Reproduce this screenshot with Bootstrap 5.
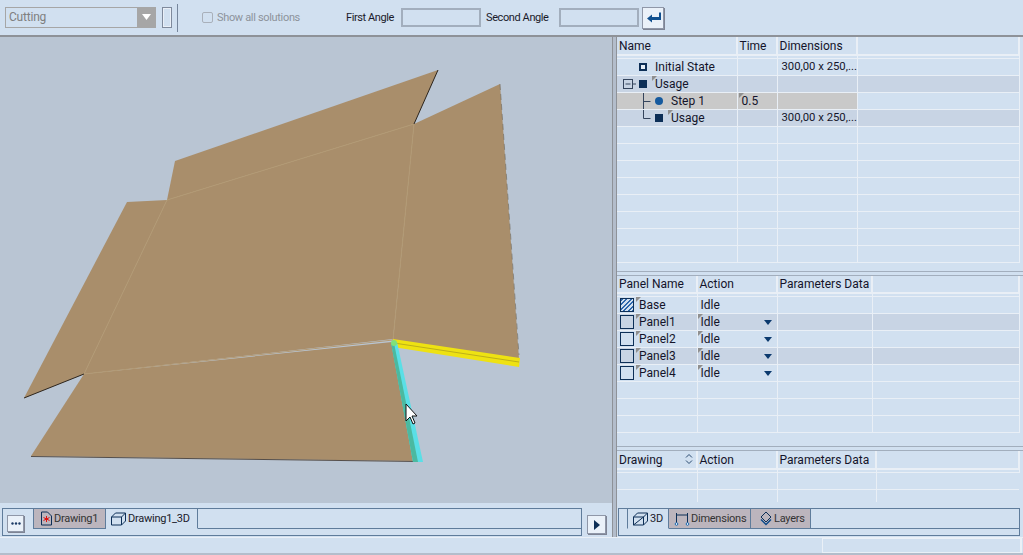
<!DOCTYPE html>
<html lang="en"><head><meta charset="utf-8"><title>Cutting</title>
<link href="https://cdn.jsdelivr.net/npm/bootstrap@5.3.0/dist/css/bootstrap.min.css" rel="stylesheet">
<style>
html,body{height:555px;overflow:hidden}
body{background:#d1e0f0;font:12px/16px Roboto,"Liberation Sans",sans-serif;color:#1a1a2a;width:1023px}
.tbar{height:37px;border-bottom:2px solid #8e9298;padding-left:5px;font-size:11px;white-space:nowrap}
.combo{width:151px;height:21px;border:1px solid #a6a6a6;margin-top:-1px;color:#7f7f7f;padding-left:3px;line-height:19px;font-size:12px;letter-spacing:-.2px}
.comboarr{width:19px;height:21px;background:#a6a6a6;margin-left:auto;margin-right:-1px;margin-top:-1px}
.mini{width:10px;height:21px;border:1px solid #7f8a9c;box-shadow:inset 0 0 0 1px #e9eff7;margin-left:6px}
.vsep{width:1px;height:28px;background:#76869c;margin-left:5px}
.chk{width:11px;height:11px;border:1px solid #a9b0ba;border-radius:2px;margin-left:24px;margin-right:4px}
.dimtxt{color:#8d939b;width:84px;letter-spacing:-.33px}
.lbl1{margin-left:45px;width:55px;letter-spacing:-.4px}
.lbl2{margin-left:5px;width:73px;letter-spacing:-.4px}
.angle{width:80px;height:19px;border:2px solid #a2aebd;background:#d1e0f0}
.okbtn{width:22px;height:22px;background:#eaf1f9;border:1px solid #8f97a8;box-shadow:1px 1px 0 #7e8494;margin-left:3px}
.mainrow{height:500px}
.leftpane{width:612px;height:500px}
.canvasbox{height:466px;background:#b9c5d3}
.canvasbox svg{display:block}
.bottomtabs{height:34px;padding:5px 0 0 2px}
.tabframe{border:1px solid #5f7c9b;height:28px;font-size:11px;letter-spacing:-.25px}
.tabframe svg{flex:none}
.lefttabs{width:580px}
.dots{width:17px;height:17px;background:#eaf1f9;border:1px solid #8f97a8;box-shadow:1px 1px 0 #7e8494;margin:6px 9px 0 4px;flex:none}
.tabitem{height:20px;border-right:1px solid #5f7c9b;border-bottom:1px solid #5f7c9b;line-height:20px;gap:1px;flex:none}
.tabon{background:#bcb5bd;color:#333}
.taboff{border-bottom-color:transparent;background:#d1e0f0}
.tabfill{height:20px;border-bottom:1px solid #5f7c9b}
.tabfirst{padding-left:6px;border-left:1px solid #5f7c9b}
.playbtn{width:19px;height:19px;background:#eaf1f9;border:1px solid #8f97a8;box-shadow:1px 1px 0 #7e8494;margin:7px 0 0 5px;flex:none}
.splitbar{width:5px;height:500px;background:#b3bdcb;border-left:1px solid #8e9298;border-right:1px solid #8e9298}
.rightpane{width:406px}
.grid1{height:235px;border-bottom:1px solid #a2aebd}
.grid2{height:172px;margin-top:3px;border-top:1px solid #a2aebd;border-bottom:1px solid #a2aebd}
.grid3{height:87px;margin-top:3px;border-top:1px solid #a2aebd}
.gridtbl{table-layout:fixed;border-collapse:collapse;width:403px}
.gridtbl td,.gridtbl th{font-weight:400;height:17px;padding:0;border:solid #e9eff6;border-width:0 1px 1px 0;line-height:16px;white-space:nowrap;overflow:hidden;color:#14142a}
.gridtbl .headrow th{height:17px;border-width:0 2px 0 0;padding-left:1.500px;vertical-align:top;padding-top:1px;position:relative}
.gridtbl .headrow th:first-child{padding-left:2px}
.gridtbl .spacerow td{height:3px;border-width:2px 1px 1px 0;font-size:0;line-height:0;background:#d1e0f0}
.grid2 .gridtbl .headrow th{height:16px;padding-top:0}
.gridtbl .oddrow td{background:#c8d4e4}
.gridtbl .selrow td.seltd{background:#c9c9c9}
.flagtxt{position:relative}
.flagtxt::before{content:"";position:absolute;left:-3px;top:-1px;border-top:5px solid #8f8f8f;border-right:5px solid transparent}
.cellicon{display:inline-block;vertical-align:-2px}
.gridtbl .dimcell{padding-left:4px;font-size:11.300px}
.gridtbl .idlecell{position:relative;padding-left:3px}
.tri{position:absolute;right:5px;top:6px;border-top:5px solid #0c3a6e;border-left:4px solid transparent;border-right:4px solid transparent}
.boxi{display:inline-block;width:14px;height:14px;border:1px solid #0d2f57;vertical-align:-3px;margin:0 5px 0 3px}
.hatched{background:repeating-linear-gradient(135deg,#2d67ad 0 1.5px,#d1e0f0 1.5px 3.2px)}
.rtabs{margin:6px 3px 0 1px;width:402px;padding-left:8px}
.statusbar{height:18px;border-top:1px solid #eaf0f7;border-bottom:2px solid #b3bdcb}
.statbox{width:200px;height:15px;margin-left:auto;margin-right:1px;border:1px solid #eaf0f7;border-right-width:2px;background:#d1e0f0}
</style></head><body>

<div class="tbar d-flex align-items-center">
<div class="combo d-flex"><span>Cutting</span><span class="comboarr d-flex align-items-center justify-content-center"><svg width="11" height="6"><path d="M1 0h9L5.500 6z" fill="#fff"/></svg></span></div>
<div class="mini"></div><div class="vsep"></div>
<div class="chk"></div><span class="dimtxt">Show all solutions</span>
<span class="lbl1">First Angle</span><div class="angle"></div>
<span class="lbl2">Second Angle</span><div class="angle"></div>
<div class="okbtn d-flex align-items-center justify-content-center"><svg width="17" height="13"><path d="M2 7.500 7 3.500V6h7V1.500h2V9H7v2.500z" fill="#11508f"/></svg></div>
</div>

<div class="mainrow d-flex">
<div class="leftpane">
<div class="canvasbox">
<svg width="612" height="466" viewBox="0 37 612 466">
<g fill="#a98e6b">
<polygon points="167,200 175,161 438,70 414,124"/>
<polygon points="414,124 500,84 519,359 393,341"/>
<polygon points="127,202 167,200 84,374 24,398"/>
<polygon points="167,200 414,124 393,339 84,374"/>
<polygon points="84,374 392,342 418,461 31,456"/>
</g>
<path d="M167 200 414 124M414 124 393 340 84 374 167 200" fill="none" stroke="#b39a74" stroke-width="1"/>
<g fill="none">
<path d="M438 70 414 124M84 374 24 398" stroke="#2c241c"/>
<path d="M500 84 519 355" stroke="#6d6658" stroke-opacity=".6" stroke-dasharray="6 4"/>
<path d="M31 456.500 418 461.500" stroke="#3c3128" stroke-opacity=".8"/>
</g>
<polygon points="393,339 520,358 519,367 393,347" fill="#eee212"/>
<path d="M394 343 519 362" stroke="#bdb019" stroke-width="1"/>
<polygon points="391,342 397,342 423,462 413,462" fill="#5adfe6"/>
<polygon points="391,343 394,343 418,462 413,462" fill="#4bb9a0"/>
<circle cx="394" cy="343" r="3" fill="#7fe07a"/>
<path d="M406 404v17l4-4 3 7 2-1-3-7h5z" fill="#fff" stroke="#111" stroke-width="1"/>
</svg>
</div>
<div class="bottomtabs d-flex">
<div class="tabframe lefttabs d-flex align-items-start">
<div class="dots d-flex align-items-center justify-content-center"><svg width="10" height="3"><circle cx="1.500" cy="1.500" r="1.200" fill="#1c3b66"/><circle cx="5" cy="1.500" r="1.200" fill="#1c3b66"/><circle cx="8.500" cy="1.500" r="1.200" fill="#1c3b66"/></svg></div>
<div class="tabitem tabon tabfirst d-flex align-items-center" style="width:73px"><svg width="13" height="15" viewBox="0 0 13 15"><path d="M1.500 1h6l4 4v9h-10z" fill="none" stroke="#0d2f57"/><path d="M6.500 5v6M3.500 6.500l6 3M9.500 6.500l-6 3" stroke="#e01010"/></svg><span>Drawing1</span></div>
<div class="tabitem taboff d-flex align-items-center ps-1" style="width:92px"><svg width="17" height="15" viewBox="0 0 17 15"><path d="M1.500 6h10v8h-10zM1.500 6l4-4h10v8l-4 4M11.500 6l4-4" fill="none" stroke="#0d2f57"/></svg><span>Drawing1_3D</span></div>
<div class="tabfill flex-grow-1"></div>
</div>
<div class="playbtn d-flex align-items-center justify-content-center"><svg width="6" height="10"><path d="M0 0l6 5-6 5z" fill="#0d2f57"/></svg></div>
</div>
</div>
<div class="splitbar"></div>
<div class="rightpane">
<div class="grid1">
<table class="gridtbl"><colgroup><col style="width:120px"><col style="width:40px"><col style="width:80px"><col></colgroup>
<tr class="headrow"><th>Name</th><th>Time</th><th>Dimensions</th><th></th></tr>
<tr class="spacerow"><td></td><td></td><td></td><td></td></tr>
<tr><td><svg class="cellicon" width="8" height="8" style="margin-left:22px;margin-right:8px;vertical-align:0"><rect x="1" y="1" width="6" height="6" fill="#e6eef7" stroke="#0d2f57" stroke-width="2"/></svg>Initial State</td><td></td><td class="dimcell">300,00 x 250,...</td><td></td></tr>
<tr class="oddrow"><td><svg class="cellicon" width="30" height="12" style="margin-left:6px;margin-right:2px"><rect x=".5" y="1.500" width="9" height="9" fill="none" stroke="#34445c"/><path d="M2.500 6h5M10 6h3" stroke="#34445c"/><rect x="16" y="2" width="8" height="8" fill="#0d2f57"/></svg><span class="flagtxt">Usage</span></td><td></td><td></td><td></td></tr>
<tr class="selrow"><td class="seltd"><svg class="cellicon" width="38" height="16" style="margin-left:16px;vertical-align:-4px"><path d="M10.500 0v16M10.500 8.500h7" stroke="#34445c" fill="none"/><circle cx="26" cy="8" r="4" fill="#165a9e"/></svg>Step 1</td><td class="seltd" style="padding-left:4px"><span class="flagtxt">0.5</span></td><td class="seltd"></td><td></td></tr>
<tr class="oddrow"><td><svg class="cellicon" width="38" height="16" style="margin-left:16px;vertical-align:-4px"><path d="M10.500 0v8.500h7" fill="none" stroke="#34445c"/><rect x="22" y="4" width="8" height="8" fill="#0d2f57"/></svg><span class="flagtxt">Usage</span></td><td></td><td class="dimcell">300,00 x 250,...</td><td></td></tr>
<tr><td>&nbsp;</td><td></td><td></td><td></td></tr><tr><td>&nbsp;</td><td></td><td></td><td></td></tr><tr><td>&nbsp;</td><td></td><td></td><td></td></tr><tr><td>&nbsp;</td><td></td><td></td><td></td></tr><tr><td>&nbsp;</td><td></td><td></td><td></td></tr><tr><td>&nbsp;</td><td></td><td></td><td></td></tr><tr><td>&nbsp;</td><td></td><td></td><td></td></tr><tr><td>&nbsp;</td><td></td><td></td><td></td></tr>
</table>
</div>
<div class="grid2">
<table class="gridtbl"><colgroup><col style="width:80px"><col style="width:80px"><col style="width:95px"><col></colgroup>
<tr class="headrow"><th>Panel Name</th><th>Action</th><th>Parameters Data</th><th></th></tr>
<tr class="spacerow"><td></td><td></td><td></td><td></td></tr>
<tr><td><span class="boxi hatched"></span><span class="flagtxt">Base</span></td><td style="padding-left:3px">Idle</td><td></td><td></td></tr>
<tr class="oddrow"><td><span class="boxi"></span><span class="flagtxt">Panel1</span></td><td class="idlecell"><span class="flagtxt">Idle</span><span class="tri"></span></td><td></td><td></td></tr>
<tr><td><span class="boxi"></span><span class="flagtxt">Panel2</span></td><td class="idlecell"><span class="flagtxt">Idle</span><span class="tri"></span></td><td></td><td></td></tr>
<tr class="oddrow"><td><span class="boxi"></span><span class="flagtxt">Panel3</span></td><td class="idlecell"><span class="flagtxt">Idle</span><span class="tri"></span></td><td></td><td></td></tr>
<tr><td><span class="boxi"></span><span class="flagtxt">Panel4</span></td><td class="idlecell"><span class="flagtxt">Idle</span><span class="tri"></span></td><td></td><td></td></tr>
<tr><td>&nbsp;</td><td></td><td></td><td></td></tr><tr><td>&nbsp;</td><td></td><td></td><td></td></tr><tr><td>&nbsp;</td><td></td><td></td><td></td></tr>
</table>
</div>
<div class="grid3">
<table class="gridtbl"><colgroup><col style="width:80px"><col style="width:80px"><col style="width:99px"><col></colgroup>
<tr class="headrow"><th>Drawing<svg width="10" height="12" style="position:absolute;left:67px;top:2px"><path d="M2 4.500 5 1.500l3 3M2 7.500l3 3 3-3" fill="none" stroke="#2a4a70"/></svg></th><th>Action</th><th>Parameters Data</th><th></th></tr>
<tr class="spacerow"><td></td><td></td><td></td><td></td></tr>
<tr><td>&nbsp;</td><td></td><td></td><td style="border-right:0"></td></tr>
<tr><td style="height:13px;border-bottom:0"></td><td style="height:13px;border-bottom:0"></td><td style="height:13px;border-bottom:0"></td><td style="height:13px;border:0"></td></tr>
</table>
<div class="tabframe rtabs d-flex align-items-start">
<div class="tabitem taboff d-flex align-items-center ps-1" style="border-left:1px solid #5f7c9b;width:42px"><svg width="17" height="15" viewBox="0 0 17 15"><path d="M1.500 6h10v8h-10zM1.500 6l4-4h10v8l-4 4M11.500 6l4-4M1.500 14l10-8" fill="none" stroke="#0d2f57"/></svg><span>3D</span></div>
<div class="tabitem tabon d-flex align-items-center ps-1" style="width:82px"><svg width="17" height="15" viewBox="0 0 17 15"><path d="M3.500 2v11M14.500 2v11M4 4h10" fill="none" stroke="#0d2f57"/><circle cx="3.500" cy="13" r="1.300" fill="#fff" stroke="#1a68b0"/><circle cx="14.500" cy="13" r="1.300" fill="#fff" stroke="#1a68b0"/></svg><span>Dimensions</span></div>
<div class="tabitem tabon d-flex align-items-center ps-2" style="width:60px"><svg width="14" height="15" viewBox="0 0 14 15"><path d="M7 1l5 5-5 5-5-5z" fill="none" stroke="#0d2f57"/><path d="M2 8.500l5 5 5-5" fill="none" stroke="#0d4a8a" stroke-width="1.500"/></svg><span>Layers</span></div>
<div class="tabfill flex-grow-1"></div>
</div>
</div>
</div>
</div>
<div class="statusbar d-flex"><div class="statbox"></div></div>
</body></html>
